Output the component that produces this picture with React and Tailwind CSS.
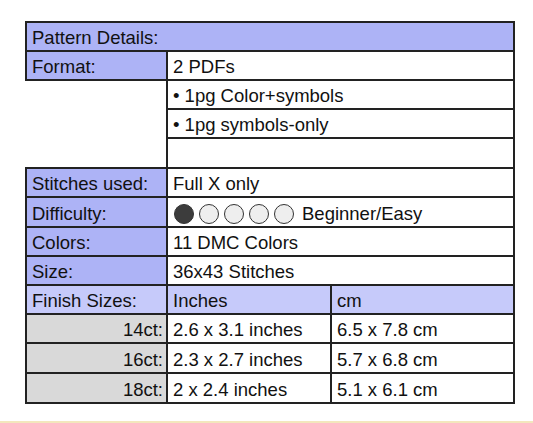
import React from "react";

const B = "border-2 border-[#222]";
const HDR = "bg-[#adb3f6]";
const LIGHT = "bg-[#c6cafa]";
const GREY = "bg-[#d9d9d9]";
const C = "pt-[3px] pb-0";

function Circle({ filled }) {
  return (
    <span
      className={
        "inline-block w-[20px] h-[20px] rounded-full border-[1.5px] border-[#333] " +
        (filled ? "bg-[#3c3c3c]" : "bg-[#eeeeee]")
      }
    />
  );
}

export default function App() {
  return (
    <div className="w-[533px] h-[423px] bg-white relative" style={{ fontFamily: '"Liberation Sans", Arial, sans-serif' }}>
      <div className="pt-[21px] pl-[25px]">
        <table className="border-collapse table-fixed text-[18.5px] leading-[24px] text-[#111]" style={{ width: 488 }}>
          <colgroup>
            <col style={{ width: 141 }} />
            <col style={{ width: 164 }} />
            <col style={{ width: 183 }} />
          </colgroup>
          <tbody>
            <tr className="h-[29px]">
              <td colSpan={3} className={`${B} ${HDR} px-[5px] ${C}`}>Pattern Details:</td>
            </tr>
            <tr className="h-[29px]">
              <td className={`${B} ${HDR} px-[5px] ${C}`}>Format:</td>
              <td colSpan={2} className={`${B} px-[5px] ${C}`}>2 PDFs</td>
            </tr>
            <tr className="h-[29px]">
              <td className="p-0"></td>
              <td colSpan={2} className={`${B} px-[5px] ${C}`}>• 1pg Color+symbols</td>
            </tr>
            <tr className="h-[29px]">
              <td className="p-0"></td>
              <td colSpan={2} className={`${B} px-[5px] ${C}`}>• 1pg symbols-only</td>
            </tr>
            <tr className="h-[30px]">
              <td className="p-0"></td>
              <td colSpan={2} className={`${B} px-[5px] ${C}`}></td>
            </tr>
            <tr className="h-[29px]">
              <td className={`${B} ${HDR} px-[5px] ${C}`}>Stitches used:</td>
              <td colSpan={2} className={`${B} px-[5px] ${C}`}>Full X only</td>
            </tr>
            <tr className="h-[30px]">
              <td className={`${B} ${HDR} px-[5px] ${C}`}>Difficulty:</td>
              <td colSpan={2} className={`${B} px-[5px] ${C}`}>
                <div className="flex items-center gap-[5px] pl-[1px]">
                  <Circle filled />
                  <Circle />
                  <Circle />
                  <Circle />
                  <Circle />
                  <span className="ml-[3px]">Beginner/Easy</span>
                </div>
              </td>
            </tr>
            <tr className="h-[29px]">
              <td className={`${B} ${HDR} px-[5px] ${C}`}>Colors:</td>
              <td colSpan={2} className={`${B} px-[5px] ${C}`}>11 DMC Colors</td>
            </tr>
            <tr className="h-[29px]">
              <td className={`${B} ${HDR} px-[5px] ${C}`}>Size:</td>
              <td colSpan={2} className={`${B} px-[5px] ${C}`}>36x43 Stitches</td>
            </tr>
            <tr className="h-[29px]">
              <td className={`${B} ${LIGHT} px-[5px] ${C}`}>Finish Sizes:</td>
              <td className={`${B} ${LIGHT} px-[5px] ${C}`}>Inches</td>
              <td className={`${B} ${LIGHT} px-[5px] ${C}`}>cm</td>
            </tr>
            <tr className="h-[29px]">
              <td className={`${B} ${GREY} px-[3px] ${C} text-right`}>14ct:</td>
              <td className={`${B} px-[5px] ${C}`}>2.6 x 3.1 inches</td>
              <td className={`${B} px-[5px] ${C}`}>6.5 x 7.8 cm</td>
            </tr>
            <tr className="h-[30px]">
              <td className={`${B} ${GREY} px-[3px] ${C} text-right`}>16ct:</td>
              <td className={`${B} px-[5px] ${C}`}>2.3 x 2.7 inches</td>
              <td className={`${B} px-[5px] ${C}`}>5.7 x 6.8 cm</td>
            </tr>
            <tr className="h-[30px]">
              <td className={`${B} ${GREY} px-[3px] ${C} text-right`}>18ct:</td>
              <td className={`${B} px-[5px] ${C}`}>2 x 2.4 inches</td>
              <td className={`${B} px-[5px] ${C}`}>5.1 x 6.1 cm</td>
            </tr>
          </tbody>
        </table>
      </div>
      <div className="absolute left-0 right-0 top-[421px] h-[2px] bg-[#f3e7bd]" />
    </div>
  );
}
